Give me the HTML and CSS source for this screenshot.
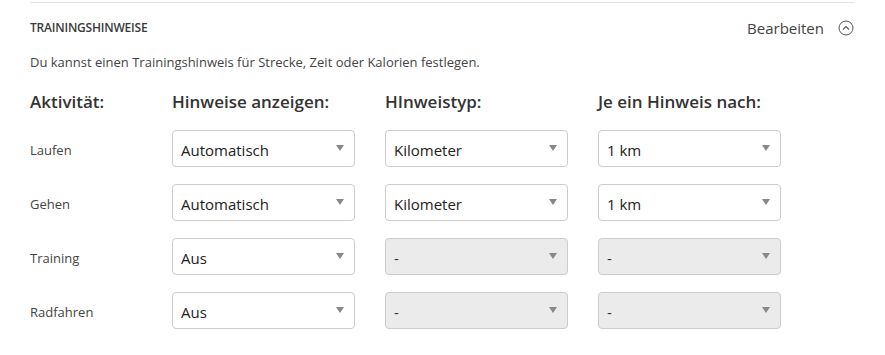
FILE: index.html
```html
<!DOCTYPE html>
<html lang="de">
<head>
   <meta charset="UTF-8">
   <title>Trainingshinweise</title>
   <link rel="stylesheet" href="styles.css">
</head>
<body>
   <div class="panel">
      <div class="panel-head">
         <h2 class="panel-title">TRAININGSHINWEISE</h2>
         <a class="edit-link">Bearbeiten
            <svg class="collapse-icon" width="16" height="16" viewBox="0 0 16 16">
               <circle cx="8" cy="8" r="7" fill="none" stroke="#555" stroke-width="1"/>
               <path d="M5 9.5 L8 6.5 L11 9.5" fill="none" stroke="#555" stroke-width="1.1"/>
            </svg>
         </a>
      </div>
      <p class="intro">Du kannst einen Trainingshinweis für Strecke, Zeit oder Kalorien festlegen.</p>

      <div class="hint-grid">
         <div class="col-head">Aktivität:</div>
         <div class="col-head">Hinweise anzeigen:</div>
         <div class="col-head">HInweistyp:</div>
         <div class="col-head">Je ein Hinweis nach:</div>

         <div class="activity">Laufen</div>
         <div class="select">Automatisch<span class="caret"></span></div>
         <div class="select">Kilometer<span class="caret"></span></div>
         <div class="select">1 km<span class="caret"></span></div>

         <div class="activity">Gehen</div>
         <div class="select">Automatisch<span class="caret"></span></div>
         <div class="select">Kilometer<span class="caret"></span></div>
         <div class="select">1 km<span class="caret"></span></div>

         <div class="activity">Training</div>
         <div class="select">Aus<span class="caret"></span></div>
         <div class="select disabled">-<span class="caret"></span></div>
         <div class="select disabled">-<span class="caret"></span></div>

         <div class="activity">Radfahren</div>
         <div class="select">Aus<span class="caret"></span></div>
         <div class="select disabled">-<span class="caret"></span></div>
         <div class="select disabled">-<span class="caret"></span></div>
      </div>
   </div>
</body>
</html>
```
FILE: styles.css
```css
body {
   margin: 0;
   background: #fff;
   font-family: "Open Sans", "Liberation Sans", sans-serif;
   color: #333;
}

.panel {
   margin: 2px 31px 0 30px;
   border-top: 1px solid #e2e2ea;
}

.panel-head {
   display: flex;
   justify-content: space-between;
   align-items: center;
   height: 49px;
}

.panel-title {
   margin: 0;
   font-size: 12px;
   font-weight: 600;
   color: #3a3a3a;
   letter-spacing: -0.2px;
}

.edit-link {
   display: flex;
   align-items: center;
   gap: 14px;
   font-size: 15px;
   color: #444;
}

.collapse-icon {
   display: block;
}

.intro {
   margin: 1px 0 0;
   font-size: 13px;
   color: #444;
}

.hint-grid {
   display: grid;
   grid-template-columns: 112px 183px 183px 183px;
   column-gap: 30px;
   row-gap: 17px;
   margin-top: 19px;
   align-items: center;
}

.col-head {
   font-size: 17px;
   font-weight: 600;
   color: #333;
   margin-bottom: 0;
}

.activity {
   font-size: 13px;
   color: #444;
   margin-top: 2px;
}

.select {
   position: relative;
   height: 37px;
   box-sizing: border-box;
   border: 1px solid #ccc;
   border-radius: 4px;
   padding: 9px 8px 0;
   font-size: 15px;
   color: #222;
   background: #fff;
}

.select.disabled {
   background: #ebebeb;
   color: #333;
}

.caret {
   position: absolute;
   right: 10px;
   top: 14px;
   width: 0;
   height: 0;
   border-left: 4px solid transparent;
   border-right: 4px solid transparent;
   border-top: 6px solid #888;
}
```
